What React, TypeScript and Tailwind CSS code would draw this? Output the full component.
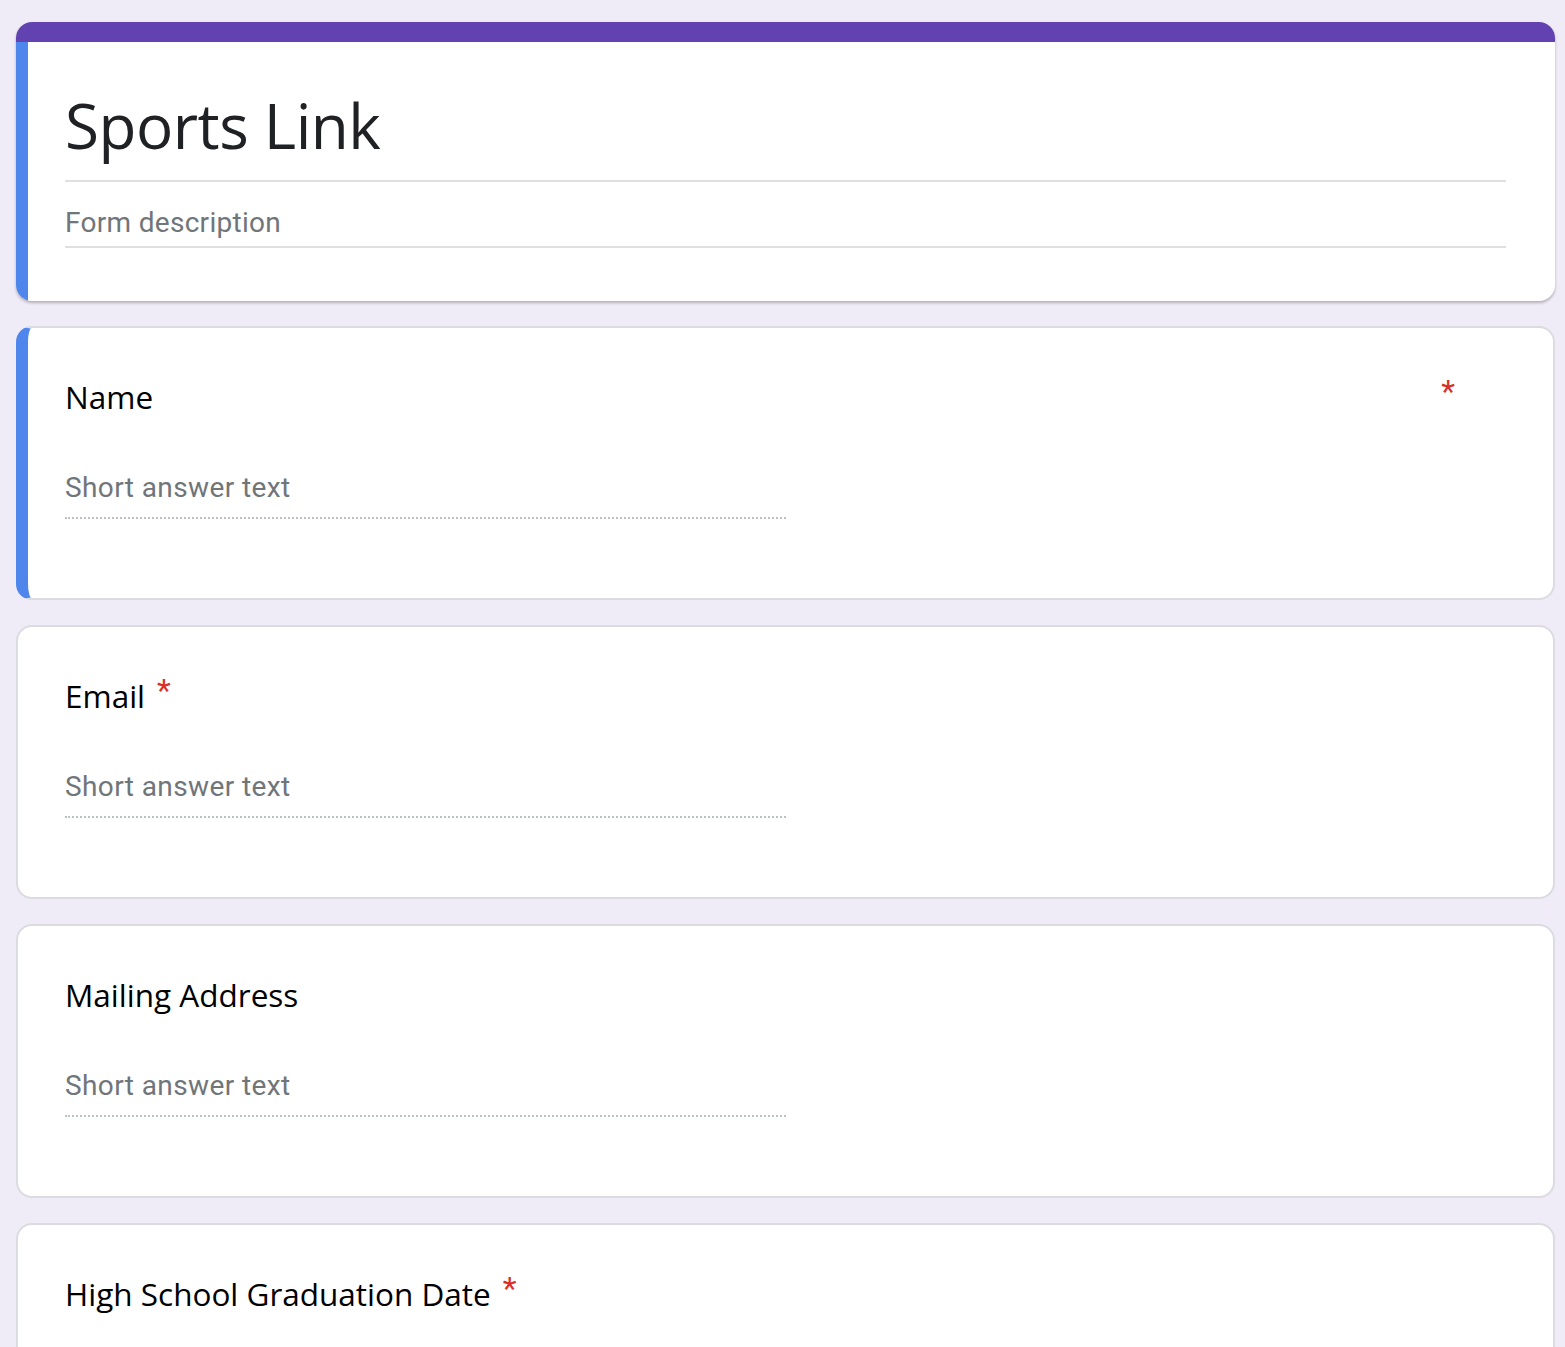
const questions = [
  { title: "Name", required: true, active: true },
  { title: "Email", required: true },
  { title: "Mailing Address", required: false },
  { title: "High School Graduation Date", required: true },
];

const headFont = { fontFamily: "'Open Sans', Roboto, sans-serif" };

function Question({
  title,
  required,
  active,
}: {
  title: string;
  required: boolean;
  active?: boolean;
}) {
  return (
    <div
      className={
        active
          ? "relative flex h-[274px] flex-col rounded-[16px] border-2 border-[#dadce0] border-l-[12px] border-l-[#4f86ec] bg-white pl-[37px] pr-[48px] pt-[48px]"
          : "relative flex h-[274px] flex-col rounded-[16px] border-2 border-[#dadce0] bg-white pl-[47px] pr-[48px] pt-[48px]"
      }
    >
      <div className="flex items-start">
        <span
          className="text-[31.5px] leading-[42px] text-[#000]"
          style={headFont}
        >
          {title}
        </span>
        {required && !active && (
          <span className="ml-[12px] mt-[-6px] text-[32px] leading-[42px] text-[#d93025] font-['Roboto',sans-serif]">
            *
          </span>
        )}
        {required && active && (
          <span className="ml-auto mr-[50px] mt-[-6px] text-[32px] leading-[42px] text-[#d93025] font-['Roboto',sans-serif]">
            *
          </span>
        )}
      </div>
      <div className="mt-[52px] w-[721px] border-b-2 border-dotted border-[#bdc1c6] pb-[11px] text-[28px] leading-[36px] tracking-[0.4px] text-[#70757a] font-['Roboto',sans-serif]">
        Short answer text
      </div>
    </div>
  );
}

export default function App() {
  return (
    <div className="min-h-[1347px] bg-[#efebf7] pb-[40px] pt-[22px]">
      <div className="ml-[16px] flex w-[1539px] flex-col gap-[25px]">
        <div className="overflow-hidden rounded-[16px] bg-white shadow-[0_2px_3px_rgba(0,0,0,0.25)]">
          <div className="h-[20px] bg-[#6142b0]" />
          <div className="flex">
            <div className="w-[12px] bg-[#4f86ec]" />
            <div className="flex-1 pb-[53px] pl-[37px] pr-[49px] pt-[44px]">
              <div
                className="border-b-2 border-[#e0e0e0] pb-[16px] text-[62px] leading-[78px] tracking-[-0.5px] text-[#202124]"
                style={headFont}
              >
                Sports Link
              </div>
              <div className="border-b-2 border-[#e0e0e0] pb-[5px] pt-[23px] text-[28px] leading-[36px] tracking-[0.3px] text-[#70757a] font-['Roboto',sans-serif]">
                Form description
              </div>
            </div>
          </div>
        </div>
        {questions.map((q) => (
          <Question key={q.title} {...q} />
        ))}
      </div>
    </div>
  );
}
